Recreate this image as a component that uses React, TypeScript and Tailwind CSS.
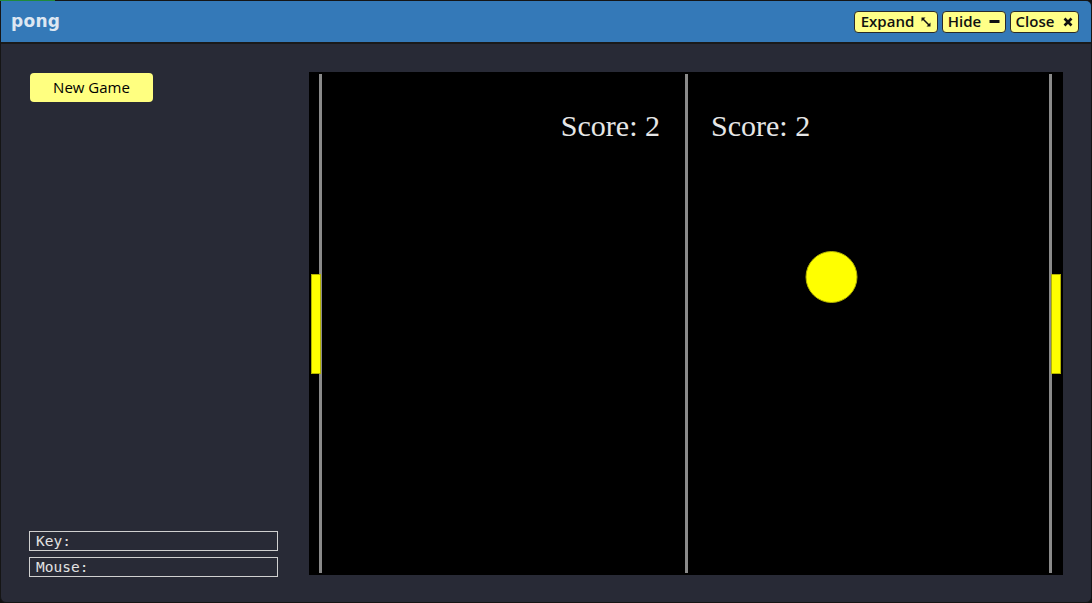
import React from 'react';

const W = 754;
const H = 503;

function ExpandIcon() {
  return (
    <svg width="10" height="10" viewBox="0 0 10 10" className="ml-[7px]">
      <path d="M0.5 0.5H4.5L0.5 4.5Z" fill="#111" />
      <path d="M9.5 9.5H5.5L9.5 5.5Z" fill="#111" />
      <path d="M1.5 1.5L8.5 8.5" stroke="#111" strokeWidth="1.5" fill="none" />
    </svg>
  );
}

function MinusIcon() {
  return (
    <svg width="11" height="11" viewBox="0 0 11 11" className="ml-[8px]">
      <rect x="0.5" y="4" width="10" height="3" fill="#111" />
    </svg>
  );
}

function CloseIcon() {
  return (
    <svg width="10" height="10" viewBox="0 0 10 10" className="ml-[9px]">
      <path d="M1.5 1.5L8.5 8.5M8.5 1.5L1.5 8.5" stroke="#111" strokeWidth="2.6" fill="none" />
    </svg>
  );
}

function HeaderButton({ label, icon, width }: { label: string; icon: React.ReactNode; width: string }) {
  return (
    <button
      className={`${width} h-[22px] flex items-center justify-center rounded-[4px] border border-[#2a2a2a] bg-[#ffff88] text-[15px] font-semibold leading-none text-[#111]`}
      style={{ fontFamily: '"Open Sans", sans-serif' }}
    >
      {label}
      {icon}
    </button>
  );
}

function Court() {
  const ball = { x: 522.5, y: 205, r: 25.5 };
  return (
    <svg width={W} height={H} className="block">
      <rect width={W} height={H} fill="#000" />
      <rect x="10" y="2" width="3" height={H - 4} fill="#8a8a8a" />
      <rect x="376" y="2" width="3" height={H - 4} fill="#8a8a8a" />
      <rect x="740" y="2" width="3" height={H - 4} fill="#8a8a8a" />
      <rect x="2.5" y="202.5" width="9" height="99" fill="#ffff00" stroke="#b3b300" strokeWidth="1" />
      <rect x="742.5" y="202.5" width="9" height="99" fill="#ffff00" stroke="#b3b300" strokeWidth="1" />
      <circle cx={ball.x} cy={ball.y} r={ball.r} fill="#ffff00" stroke="#b3b300" strokeWidth="1" />
      <text
        x="351"
        y="64"
        textAnchor="end"
        fill="#e6e6e6"
        fontSize="30"
        fontFamily='"Liberation Serif", serif'
      >
        Score: 2
      </text>
      <text x="402" y="64" fill="#e6e6e6" fontSize="30" fontFamily='"Liberation Serif", serif'>
        Score: 2
      </text>
    </svg>
  );
}

export default function App() {
  return (
    <div className="relative w-[1092px] h-[603px] bg-[#111]">
      <div className="absolute left-0 top-0 h-px w-[55px] bg-[#1f8a3a]" />
      <div className="flex h-full w-full flex-col overflow-hidden rounded-[6px] rounded-tl-none border border-[#151515] bg-[#282a36]">
        {/* title bar */}
        <div className="flex h-[43px] items-center justify-between border-b-2 border-[#1a1a1a] bg-[#3479b8] pl-[10px] pr-[12px]">
          <span
            className="text-[17px] font-bold leading-none tracking-[0.3px] text-[#dde7f2]"
            style={{ fontFamily: '"DejaVu Sans", sans-serif' }}
          >
            pong
          </span>
          <div className="flex items-center gap-[4px]">
            <HeaderButton label="Expand" icon={<ExpandIcon />} width="w-[84px]" />
            <HeaderButton label="Hide" icon={<MinusIcon />} width="w-[64px]" />
            <HeaderButton label="Close" icon={<CloseIcon />} width="w-[69px]" />
          </div>
        </div>

        {/* body */}
        <div className="flex flex-1 pt-[28px]">
          <div className="flex w-[308px] flex-col justify-between pl-[28px] pb-[25px]">
            <button
              className="ml-px mt-px h-[29px] w-[123px] rounded-[4px] bg-[#ffff80] text-[15px] leading-none text-black"
              style={{ fontFamily: '"Open Sans", sans-serif' }}
            >
              New Game
            </button>
            <div
              className="flex w-[249px] flex-col gap-[6px] text-[14.5px] leading-none text-[#e2e2e2]"
              style={{ fontFamily: '"DejaVu Sans Mono", monospace' }}
            >
              <div className="flex h-[20px] items-center border border-[#d0d0d0] pl-[6px]">Key:</div>
              <div className="flex h-[20px] items-center border border-[#d0d0d0] pl-[6px]">Mouse:</div>
            </div>
          </div>
          <div className="h-[503px]">
            <Court />
          </div>
        </div>
      </div>
    </div>
  );
}
